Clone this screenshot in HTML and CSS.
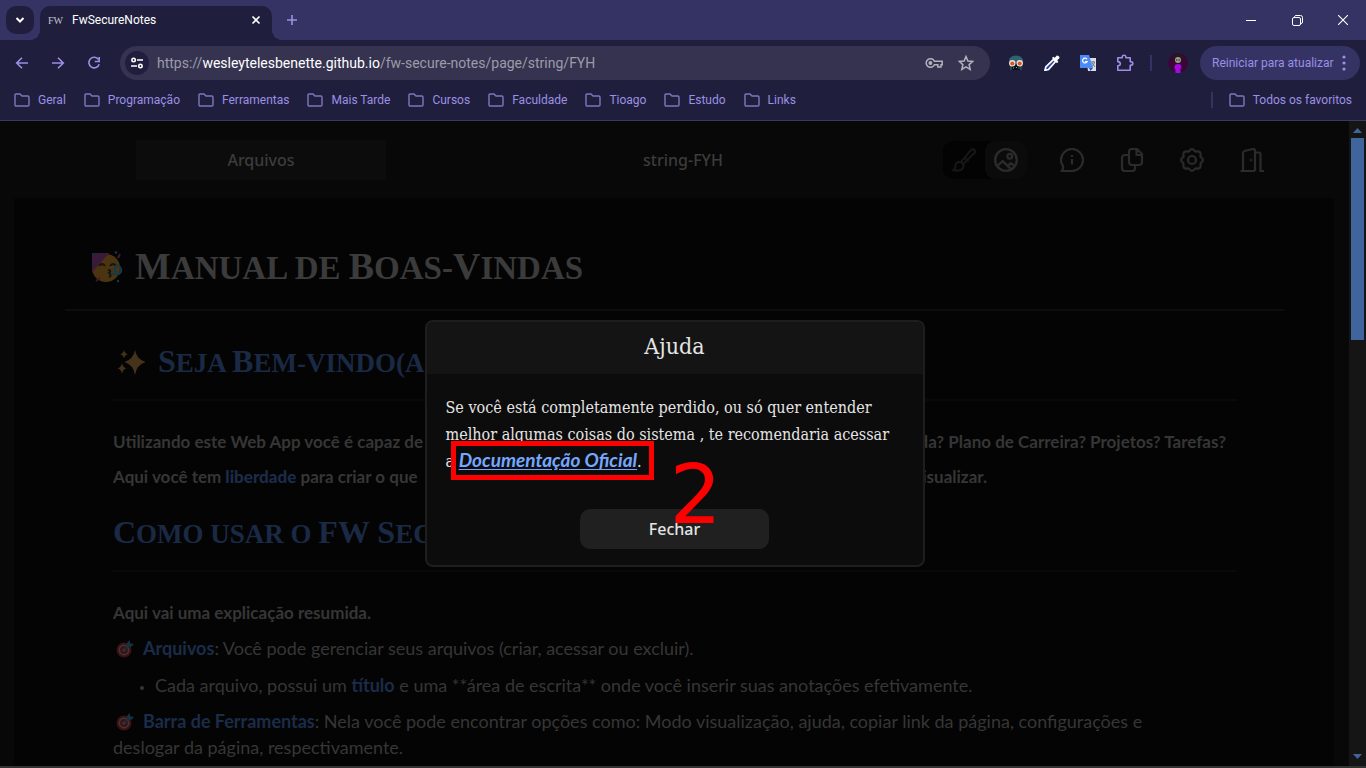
FILE: index.html
```html
<!DOCTYPE html>
<html lang="pt-BR">
<head>
<meta charset="utf-8">
<title>FwSecureNotes</title>
<link rel="stylesheet" href="styles.css">
</head>
<body>
<svg class="defs" aria-hidden="true">
  <symbol id="folder" viewBox="0 0 16 14"><path d="M1 2.200Q1 1 2.200 1H6l2 2h5.800q1.200 0 1.200 1.200v7.600q0 1.200-1.200 1.200H2.200Q1 13 1 11.800z" fill="none" stroke="currentColor" stroke-width="1.400"/></symbol>
  <symbol id="dart" viewBox="0 0 18 18"><circle cx="8" cy="10" r="7.500" fill="#3d1114"/><circle cx="8" cy="10" r="5.400" fill="#3a3a3a"/><circle cx="8" cy="10" r="3.900" fill="#3d1114"/><circle cx="8" cy="10" r="1.600" fill="#3a3a3a"/><path d="M8 10l5-5" stroke="#12333f" stroke-width="1.500"/><path d="M11 6.500V3l2.500-3 .8 3.200L18 4l-3 3z" fill="#12333f"/></symbol>
</svg>
<header class="browser">
  <div class="tabstrip">
    <button class="tab-search" aria-label="Pesquisar guias"><svg width="12" height="12" viewBox="0 0 12 12"><path d="M2.500 4l3.500 3.500L9.500 4" fill="none" stroke="#fff" stroke-width="2"/></svg></button>
    <div class="tab">
      <span class="favicon">FW</span><span class="tab-title">FwSecureNotes</span>
      <button class="icon-btn tab-close" aria-label="Fechar guia"><svg width="10" height="10" viewBox="0 0 10 10"><path d="M1.500 1.500l7 7M8.500 1.500l-7 7" stroke="#fff" stroke-width="1.600"/></svg></button>
    </div>
    <button class="icon-btn new-tab" aria-label="Nova guia"><svg width="12" height="12" viewBox="0 0 12 12"><path d="M6 1v10M1 6h10" stroke="currentColor" stroke-width="1.600"/></svg></button>
    <div class="window-controls">
      <button class="win-btn" aria-label="Minimizar"><svg width="10" height="10" viewBox="0 0 10 10"><path d="M0 5.500h10" stroke="#fff"/></svg></button>
      <button class="win-btn" aria-label="Restaurar"><svg width="11" height="11" viewBox="0 0 11 11"><rect x=".5" y="2.500" width="8" height="8" rx="1.500" fill="none" stroke="#fff"/><path d="M2.500 2V1.500Q3 .5 4 .5h4.500q2 0 2 2V7q0 1.500-1.500 1.500" fill="none" stroke="#fff"/></svg></button>
      <button class="win-btn" aria-label="Fechar"><svg width="10" height="10" viewBox="0 0 10 10"><path d="M0 0l10 10M10 0L0 10" stroke="#fff" stroke-width="1.100"/></svg></button>
    </div>
  </div>
  <div class="toolbar">
    <nav class="nav-buttons">
      <button class="icon-btn nav-btn" aria-label="Voltar"><svg width="14" height="14" viewBox="0 0 14 14"><path d="M13 7H2M7 1.700L1.700 7 7 12.300" fill="none" stroke="currentColor" stroke-width="1.600"/></svg></button>
      <button class="icon-btn nav-btn" aria-label="Avançar"><svg width="14" height="14" viewBox="0 0 14 14"><path d="M1 7H12M7 1.700L12.300 7 7 12.300" fill="none" stroke="currentColor" stroke-width="1.600"/></svg></button>
      <button class="icon-btn nav-btn" aria-label="Recarregar"><svg width="14" height="14" viewBox="0 0 14 14"><path d="M11.500 3.500A5.300 5.300 0 1 0 12.200 8.300" fill="none" stroke="currentColor" stroke-width="1.600"/><path d="M12.200 1v4.500H7.800" fill="none" stroke="currentColor" stroke-width="1.600"/></svg></button>
    </nav>
    <div class="omnibox">
      <button class="site-info" aria-label="Informações do site"><svg width="12" height="12" viewBox="0 0 12 12" fill="none" stroke="#fff" stroke-width="1.600"><circle cx="2.600" cy="3" r="1.700"/><path d="M6 3h6M0 9h6"/><circle cx="9.400" cy="9" r="1.700"/></svg></button>
      <span class="url">https://<b>wesleytelesbenette.github.io</b>/fw-secure-notes/page/string/FYH</span>
      <svg class="key" width="18" height="12" viewBox="0 0 18 12" fill="none" stroke="#b3b1bd" stroke-width="1.500"><path d="M9.400 4.300H17.200V7.700H16v2.200H12.800V7.700H9.400A4.300 4.300 0 1 1 9.400 4.300z"/><circle cx="5.400" cy="6" r="1.200" fill="#b3b1bd"/></svg>
      <svg width="16" height="16" viewBox="0 0 16 16"><path d="M8 1.500l1.900 4.500 4.900.4-3.700 3.200 1.100 4.800L8 11.900l-4.200 2.500 1.100-4.800L1.200 6.400 6.100 6z" fill="none" stroke="#b3b1bd" stroke-width="1.500"/></svg>
    </div>
    <div class="extensions">
      <svg width="16" height="16" viewBox="0 0 16 16"><path d="M1 8Q0 1 8 .5 16 1 15 8z" fill="#2c6474"/><path d="M2 11h12v4H2z" fill="#214755"/><path d="M4 10l4-2 4 2v5H4z" fill="#090f19"/><circle cx="4.300" cy="8.200" r="3.200" fill="#efe1d5"/><circle cx="11.700" cy="8.200" r="3.200" fill="#efe1d5"/><circle cx="4.300" cy="8.400" r="2" fill="#d9532d"/><circle cx="11.700" cy="8.400" r="2" fill="#d9532d"/><path d="M5 13h1M8 12.500h1M10.500 13h1" stroke="#38b6b6"/></svg>
      <svg width="16" height="16" viewBox="0 0 16 16"><path d="M9.500 4.500l2 2-7 8-3.500.8.800-3.300z" fill="#2942a5" stroke="#fff" stroke-width="1.700"/><path d="M8 3l1.200-1.200 1.600 1 2-2.300Q15.500.5 15.500 3l-2.200 2.200 1 1.600L13 8.200z" fill="#fff"/></svg>
      <svg width="16" height="16" viewBox="0 0 16 16"><path d="M6 3h10v13H8z" fill="#dcdde0"/><path d="M0 0h9l4 13H0z" fill="#4c8bf5"/><path d="M9 13h4l-2.500 3z" fill="#2458bd"/><path d="M7 4.300A2.400 2.400 0 1 0 7.200 6.500H5" fill="none" stroke="#fff" stroke-width="1.200"/><path d="M11 7h4M13 6v1M14.500 7q-.5 3-3 5M12 8l3 4" stroke="#69798c" fill="none"/></svg>
      <svg width="18" height="18" viewBox="0 0 18 18"><path d="M1.800 3.800h4.400Q6 1.200 8 1.200t1.900 2.600h4.300V7.600q2.600 0 2.600 1.900t-2.600 1.900v4.800H1.800v-4.300q2.500-.4 2.500-2.200T1.800 7.600z" fill="none" stroke="currentColor" stroke-width="1.600" stroke-linejoin="round"/></svg>
    </div>
    <span class="divider"></span>
    <svg class="avatar" width="20" height="20" viewBox="0 0 20 20"><circle cx="10" cy="10" r="10" fill="#3a0638"/><path d="M5.500 6Q4 2 9 1.500q7-.5 5.500 6l-2 2.500h-5z" fill="#211d1b"/><circle cx="10" cy="7" r="3" fill="#a29b91"/><path d="M8 7h1.500M10.500 7H12" stroke="#272226"/><path d="M7 12q3-2 6 0l.5 3-1 .5L12.500 20h-5l-.3-4.500-1-.5z" fill="#a20be0"/></svg>
    <button class="update-btn">Reiniciar para atualizar<svg width="4" height="16" viewBox="0 0 4 16" fill="currentColor"><circle cx="2" cy="2" r="1.600"/><circle cx="2" cy="8" r="1.600"/><circle cx="2" cy="14" r="1.600"/></svg></button>
  </div>
  <nav class="bookmarks">
    <button class="bookmark"><svg width="16" height="14"><use href="#folder"/></svg>Geral</button>
    <button class="bookmark"><svg width="16" height="14"><use href="#folder"/></svg>Programação</button>
    <button class="bookmark"><svg width="16" height="14"><use href="#folder"/></svg>Ferramentas</button>
    <button class="bookmark"><svg width="16" height="14"><use href="#folder"/></svg>Mais Tarde</button>
    <button class="bookmark"><svg width="16" height="14"><use href="#folder"/></svg>Cursos</button>
    <button class="bookmark"><svg width="16" height="14"><use href="#folder"/></svg>Faculdade</button>
    <button class="bookmark"><svg width="16" height="14"><use href="#folder"/></svg>Tioago</button>
    <button class="bookmark"><svg width="16" height="14"><use href="#folder"/></svg>Estudo</button>
    <button class="bookmark"><svg width="16" height="14"><use href="#folder"/></svg>Links</button>
    <span class="divider bookmarks-divider"></span>
    <button class="bookmark"><svg width="16" height="14"><use href="#folder"/></svg>Todos os favoritos</button>
  </nav>
</header>

<div class="viewport">
  <main class="app">
    <div class="app-bar">
      <button class="files-btn">Arquivos</button>
      <span class="page-name">string-FYH</span>
      <div class="tools">
        <div class="mode-toggle">
          <button class="mode" aria-label="Editar"><svg width="26" height="26" viewBox="0 0 24 24" fill="none" stroke="currentColor" stroke-width="2" stroke-linecap="round" stroke-linejoin="round"><path d="M9 14L18.500 2.800Q20 1.400 21.500 2.700t.2 2.800L11.500 15.500M13 10l2.500 2.500M9 14a3.800 3.800 0 0 0-5 3.500q.2 2.500-2 4Q11 23 11.500 17.500 11.400 15 9 14z"/></svg></button>
          <button class="mode mode-active" aria-label="Visualizar"><svg width="26" height="26" viewBox="0 0 24 24" fill="none" stroke="currentColor" stroke-width="2.200" stroke-linejoin="round"><circle cx="12" cy="12" r="10"/><circle cx="15.500" cy="8.500" r="2.200"/><path d="M4 17.500l5-4.500 7.500 7.500M13.500 17.500l3-2.500 3.500 2.500"/></svg></button>
        </div>
        <button class="tool" aria-label="Ajuda"><svg width="24" height="24" viewBox="0 0 24 24" fill="none" stroke="currentColor" stroke-width="2.200" stroke-linejoin="round"><path d="M1.500 23q2-2 1.500-5Q1 15 1 12a11 11 0 1 1 11 11z"/><path d="M12 11v5.500M12 7v2"/></svg></button>
        <button class="tool" aria-label="Copiar link"><svg width="24" height="24" viewBox="0 0 24 24" fill="none" stroke="currentColor" stroke-width="2.200" stroke-linejoin="round"><path d="M9 4q0-3 3-3h5l5 5v8q0 3-3 3h-7q-3 0-3-3zM16.500 1.500V7H22M9 7H5Q2 7 2 10v10q0 3 3 3h7q3 0 3-3v-3"/></svg></button>
        <button class="tool" aria-label="Configurações"><svg width="24" height="24" viewBox="0 0 24 24" fill="none" stroke="currentColor" stroke-width="2.200" stroke-linejoin="round"><circle cx="12" cy="12" r="4"/><path d="M9.400 2.800Q12-.6 14.600 2.800 15.600 4 17.200 3.400 20.900 3.100 20.600 6.800 20 8.400 21.200 9.400 24.600 12 21.200 14.600 20 15.600 20.600 17.200 20.900 20.900 17.200 20.600 15.600 20 14.600 21.200 12 24.600 9.400 21.200 8.400 20 6.800 20.600 3.100 20.900 3.400 17.200 4 15.600 2.800 14.600-.6 12 2.800 9.400 4 8.400 3.400 6.800 3.100 3.100 6.800 3.400 8.400 4 9.400 2.800z"/></svg></button>
        <button class="tool" aria-label="Sair"><svg width="24" height="24" viewBox="0 0 24 24" fill="none" stroke="currentColor" stroke-width="2.200" stroke-linejoin="round"><path d="M.5 23H15M3 23V5Q3 3.500 4.500 3L13 1q2-.2 2 2v20M15 4.500h3.500q2 0 2 2V23H24"/><circle cx="11" cy="12" r=".4"/></svg></button>
      </div>
    </div>
    <article class="note">
      <h1><svg width="32" height="32" viewBox="0 0 32 32"><circle cx="15" cy="17" r="14" fill="#4b3511"/><path d="M1 2h17L1 21z" fill="#282438"/><path d="M1 7l6-5h4L1 13zM1 17L14 2h4L1 21z" fill="#43163a"/><path d="M8 15q3-4 6 0M19 15q3-4 6 0M17 19q4 0 1 3 4 2 0 4" fill="none" stroke="#161514" stroke-width="2"/><path d="M20 23h8q4-3 1-7t-5 1 2 3" fill="none" stroke="#123c4c" stroke-width="2"/><path d="M27 7l2-4M5 30l4-3" stroke="#43163a" stroke-width="2"/><circle cx="25" cy="1.500" r="1.200" fill="#123c4c"/><circle cx="27" cy="30" r="1.200" fill="#123c4c"/></svg><span><span class="cap">M</span>anual de <span class="cap">B</span>oas-<span class="cap">V</span>indas</span></h1>
      <section>
        <h2><svg width="36" height="28" viewBox="0 0 36 28" fill="#44331a"><path d="M22 1q1.500 9 10.500 12Q23.500 16 22 26q-1.500-10-10.500-13Q20.500 10 22 1zM11 1q.7 3.500 4 4.300-3.300.8-4 4.200-.7-3.400-4-4.200 3.300-.8 4-4.300zM9 14q.8 4.500 4.500 5.300Q9.800 20.200 9 25q-.8-4.800-4.500-5.700Q8.200 18.500 9 14z"/></svg><span><span class="cap">S</span>eja <span class="cap">B</span>em-vindo(a)</span></h2>
        <p class="split strong"><span>Utilizando este Web App você é capaz de</span><span>da? Plano de Carreira? Projetos? Tarefas?</span></p>
        <p class="split split-short strong"><span>Aqui você tem <b>liberdade</b> para criar o que</span><span>isualizar.</span></p>
        <h2><span><span class="cap">C</span>omo usar o <span class="cap">FW S</span>ecure</span></h2>
        <p class="strong">Aqui vai uma explicação resumida.</p>
        <p><svg class="dart" width="18" height="18"><use href="#dart"/></svg><b>Arquivos</b>: Você pode gerenciar seus arquivos (criar, acessar ou excluir).</p>
        <ul><li>Cada arquivo, possui um <b>título</b> e uma **área de escrita** onde você inserir suas anotações efetivamente.</li></ul>
        <p><svg class="dart" width="18" height="18"><use href="#dart"/></svg><b>Barra de Ferramentas</b>: Nela você pode encontrar opções como: Modo visualização, ajuda, copiar link da página, configurações e<br>deslogar da página, respectivamente.</p>
      </section>
    </article>
    <div class="overlay">
      <div class="modal" role="dialog" aria-labelledby="modal-title">
        <h3 class="modal-title" id="modal-title">Ajuda</h3>
        <div class="modal-body">
          <p class="modal-text">Se você está completamente perdido, ou só quer entender<br>melhor algumas coisas do sistema , te recomendaria acessar<br>a <a class="doc-link" href="#">Documentação Oficial</a>.</p>
          <button class="close-btn">Fechar</button>
        </div>
        <span class="mark-box"></span>
        <span class="mark-number">2</span>
      </div>
    </div>
  </main>
  <div class="scrollbar">
    <svg width="9" height="5" viewBox="0 0 9 5"><path d="M0 5l4.500-5L9 5z" fill="#40649c"/></svg>
    <span class="thumb"></span>
    <svg class="arrow-down" width="9" height="5" viewBox="0 0 9 5"><path d="M0 0h9L4.500 5z" fill="#40649c"/></svg>
  </div>
</div>
</body>
</html>
```
FILE: styles.css
```css
* { box-sizing: border-box; }
body {
  margin: 0;
  height: 100vh;
  display: flex;
  flex-direction: column;
  overflow: hidden;
  background: #333;
  font-family: Roboto, "Noto Sans", sans-serif;
}
button { font: inherit; color: inherit; border: 0; padding: 0; background: none; }
svg { flex: none; display: block; }
.defs { position: absolute; width: 0; height: 0; }
.icon-btn { display: grid; place-items: center; }

/* browser frame */
.browser {
  flex: none;
  background: #1f1f3d;
  color: #9c8fe4;
  border-bottom: 1px solid #3c3964;
  font-size: 12px;
}
.tabstrip { display: flex; height: 40px; padding: 6px 0 0 6px; background: #343364; }
.tab-search {
  display: grid;
  place-items: center;
  width: 28px;
  height: 28px;
  border-radius: 10px;
  background: #1f1f3d;
}
.tab {
  position: relative;
  display: flex;
  align-items: center;
  width: 232px;
  height: 34px;
  margin-left: 6px;
  padding: 0 8px 6px;
  border-radius: 10px 10px 0 0;
  background: #1f1f3d;
  color: #fff;
}
.tab::before, .tab::after {
  content: "";
  position: absolute;
  bottom: 0;
  width: 10px;
  height: 10px;
}
.tab::before { left: -10px; background: radial-gradient(circle at 0 0, transparent 10px, #1f1f3d 10px); }
.tab::after { right: -10px; background: radial-gradient(circle at 100% 0, transparent 10px, #1f1f3d 10px); }
.favicon { width: 24px; font: 10px "Liberation Serif", serif; color: #c4c3cf; }
.tab-close { width: 16px; height: 16px; margin-left: auto; }
.new-tab { width: 28px; height: 28px; margin-left: 6px; }
.window-controls { display: flex; margin-left: auto; }
.win-btn { display: grid; place-items: center; width: 46px; height: 28px; }

.toolbar { display: flex; align-items: center; height: 46px; padding: 0 6px 0 4px; }
.nav-buttons { display: flex; }
.nav-btn { width: 36px; height: 34px; }
.omnibox {
  flex: 1;
  display: flex;
  align-items: center;
  height: 34px;
  margin-left: 8px;
  padding: 0 16px 0 5px;
  border-radius: 17px;
  background: #353350;
}
.site-info {
  display: grid;
  place-items: center;
  width: 24px;
  height: 24px;
  border-radius: 12px;
  background: #1f1f3d;
}
.url { flex: 1; margin-left: 8px; font-size: 14px; color: #9d9ba9; white-space: nowrap; }
.url b { font-weight: 400; color: #fff; }
.key { margin-right: 15px; }
.extensions { display: flex; align-items: center; gap: 20px; margin-left: 18px; }
.divider { width: 2px; height: 16px; background: #343364; }
.toolbar .divider { margin-left: 16px; }
.avatar { margin-left: 16px; }
.update-btn {
  display: flex;
  align-items: center;
  justify-content: space-between;
  width: 160px;
  height: 34px;
  margin-left: 12px;
  padding: 0 14px 0 12px;
  border-radius: 17px;
  background: #343364;
  white-space: nowrap;
}
.bookmarks { display: flex; align-items: center; gap: 18px; height: 34px; padding: 0 14px 6px; }
.bookmark { display: flex; align-items: center; gap: 8px; white-space: nowrap; }
.bookmark svg { color: #7f76bd; }
.bookmarks-divider { margin-left: auto; margin-right: -2px; }

/* page */
.viewport { flex: 1; min-height: 0; display: flex; margin-bottom: 2px; background: #080808; }
.app { position: relative; flex: 1; min-width: 0; overflow: hidden; }
.app-bar {
  display: grid;
  grid-template-columns: 1fr auto 1fr;
  align-items: center;
  height: 77px;
  padding: 0 85px 0 102px;
  color: #3c3c3c;
  font-family: "Noto Sans", sans-serif;
  font-size: 16px;
  font-weight: 500;
}
.files-btn { width: 250px; height: 40px; margin-left: 34px; background: #0c0c0c; }
.tools { display: flex; align-items: center; justify-self: end; color: #2b2b2b; }
.tool { margin-left: 36px; }
.mode-toggle + .tool { margin-left: 33px; }
.mode-toggle { display: flex; border-radius: 10px; background: #030303; }
.mode { display: grid; place-items: center; width: 42px; height: 38px; border-radius: 10px; color: #161616; }
.mode-active { background: #0b0b0b; color: #2b2b2b; }

.note {
  min-height: 100%;
  margin: 0 15px 0 14px;
  padding: 40px 50px 0 51px;
  background: #040404;
  color: #363636;
  font-family: Lato, "Noto Sans", sans-serif;
  font-size: 18px;
  line-height: 26px;
}
h1, h2 {
  display: flex;
  align-items: center;
  margin: 0;
  font-family: "Liberation Serif", serif;
  font-weight: 700;
  text-transform: uppercase;
  white-space: nowrap;
}
.cap { line-height: 1; }
h1 {
  height: 73px;
  gap: 12px;
  padding: 0 26px 13px;
  border-bottom: 2px solid #0b0d11;
  color: #3b3b3b;
  font-size: 33px;
  line-height: 40px;
}
h1 .cap { font-size: 38px; }
h2 {
  height: 63px;
  gap: 9px;
  padding-bottom: 11px;
  border-bottom: 2px solid #090909;
  color: #1a2a45;
  font-size: 27px;
  line-height: 40px;
}
h2 .cap { font-size: 32px; }
section { padding: 27px 47px 0 48px; }
section b { color: #1b2c49; }
section p { margin: 9px 0 0; }
h2 + p { margin-top: 28px; }
p + h2 { margin-top: 19px; }
.split { display: flex; justify-content: space-between; padding-right: 11px; }
.split-short { padding-right: 250px; }
.strong { font-size: 17px; font-weight: 700; }
.dart { display: inline-block; vertical-align: -3px; margin: 0 9px 0 3px; }
ul { margin: 11px 0 10px; padding-left: 42px; }
li::marker { font-size: 12px; }

/* dialog */
.overlay { position: absolute; inset: 0; display: grid; place-items: center; }
.modal {
  position: relative;
  width: 500px;
  border: 2px solid #1e1e1e;
  border-radius: 8px;
  background: #0c0c0c;
  color: #e4e4e4;
  font-family: "DejaVu Serif Condensed", "DejaVu Serif", serif;
  overflow: hidden;
}
.modal-title {
  margin: 0;
  height: 52px;
  background: #141414;
  font-size: 23px;
  font-weight: 400;
  line-height: 48px;
  text-align: center;
}
.modal-body { padding: 20px 19px 16px; }
.modal-text { height: 81px; margin: 0 0 34px; font-size: 16px; line-height: 27px; white-space: nowrap; }
.doc-link { color: #75a7ff; font: italic 700 19px/20px Lato, sans-serif; text-underline-offset: 2px; }
.close-btn {
  display: block;
  width: 189px;
  height: 40px;
  margin: 0 auto;
  border-radius: 10px;
  background: #202020;
  font: 500 16px "Noto Sans", sans-serif;
}
.mark-box { position: absolute; left: 24px; top: 119px; width: 203px; height: 39px; border: 5px solid #f00; }
.mark-number {
  position: absolute;
  left: 243px;
  top: 128px;
  color: #f00;
  font: 82px/90px "DejaVu Sans", sans-serif;
}

.scrollbar {
  display: flex;
  flex-direction: column;
  align-items: center;
  width: 17px;
  padding: 7px 0;
  background: #151515;
}
.thumb { width: 13px; height: 202px; margin-top: 5px; background: #40649c; }
.arrow-down { margin-top: auto; }
```
